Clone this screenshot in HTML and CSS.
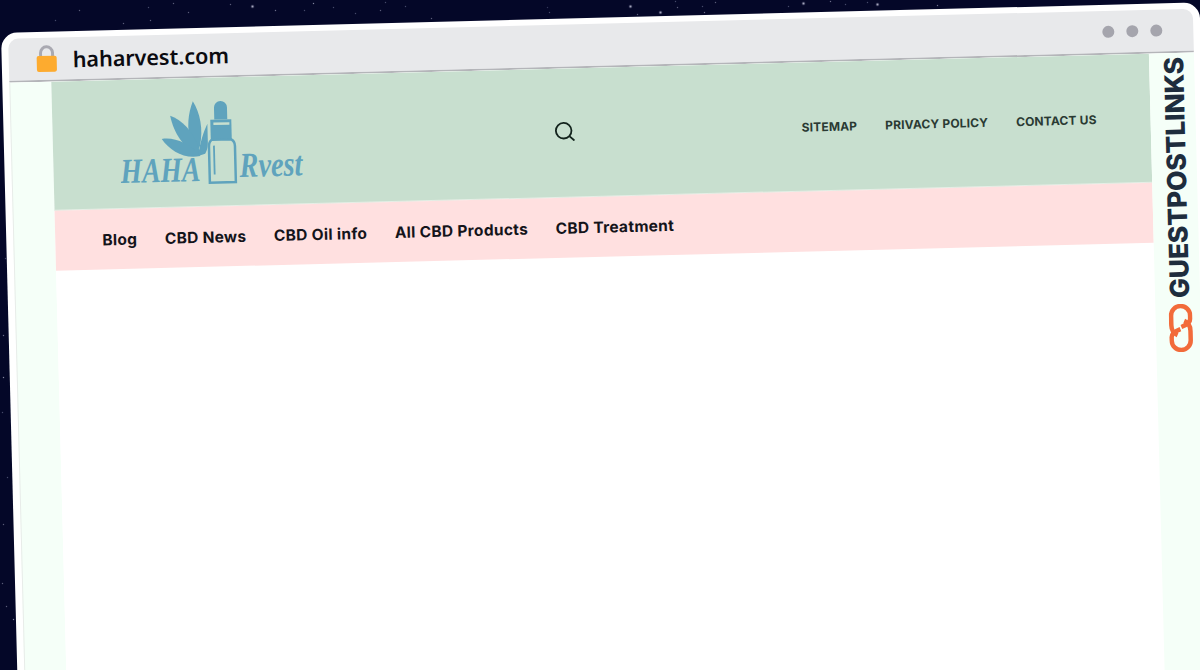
FILE: index.html
```html
<!DOCTYPE html>
<html>
<head>
  <meta charset="UTF-8">
  <title>haharvest.com</title>
  <link rel="stylesheet" href="styles.css">
</head>
<body>
  <div class="stage">
    <div class="stars"></div>
    <div class="window">
      <div class="chrome">
        <svg class="lock" width="22" height="28" viewBox="0 0 22 28">
          <path d="M5 13V8a6 6 0 0 1 12 0v5" fill="none" stroke="#a9a9b1" stroke-width="3"/>
          <rect x="1" y="11" width="20" height="16" rx="2" fill="#fdab2f"/>
        </svg>
        <span class="domain">haharvest.com</span>
        <div class="dots">
          <span class="dot"></span>
          <span class="dot"></span>
          <span class="dot"></span>
        </div>
      </div>
      <div class="frame">
        <div class="side side-left"></div>
        <div class="page">
          <header class="site-header">
            <svg class="logo" width="214" height="100" viewBox="0 -7 214 100">
              <g fill="#5fa3bd">
                <path d="M74 2C81 14 84 30 80 47C78 53 73 52 71 44C67 28 69 14 74 2Z"/>
                <path d="M51 16C62 20 74 32 79 50L80 57C64 50 54 33 51 16Z"/>
                <path d="M42 39C54 37 70 44 80 57C64 60 50 51 42 39Z"/>
                <path d="M88 25C84 33 80 44 78 57L85 55C88 50 88 46 88 42Z"/>
                <path d="M95 21V9a6.500 6.500 0 0 1 13 0V21Z"/>
                <path d="M91 21H112V41H91Z"/>
              </g>
              <rect x="94" y="24" width="16" height="2.500" fill="#c8dfcf"/>
              <path d="M92 41H111Q115 43 115 48V84H89V48Q89 43 92 41Z" fill="#c8dfcf" stroke="#5fa3bd" stroke-width="2.500"/>
              <path d="M94 47V76" stroke="#5fa3bd" stroke-width="1.800"/>
              <text class="logo-text" x="0" y="82" textLength="80" lengthAdjust="spacingAndGlyphs">HAHA</text>
              <text class="logo-text" x="119" y="79" textLength="63" lengthAdjust="spacingAndGlyphs">Rvest</text>
            </svg>
            <svg class="search" width="22" height="22" viewBox="0 0 22 22" fill="none" stroke="#13231d" stroke-width="1.800">
              <circle cx="10" cy="10" r="7.800"/>
              <path d="M15.800 15.800L20 19.500" stroke-linecap="round"/>
            </svg>
            <nav class="top-links">
              <a>SITEMAP</a>
              <a>PRIVACY POLICY</a>
              <a>CONTACT US</a>
            </nav>
          </header>
          <nav class="main-nav">
            <a>Blog</a>
            <a>CBD News</a>
            <a>CBD Oil info</a>
            <a>All CBD Products</a>
            <a>CBD Treatment</a>
          </nav>
        </div>
        <div class="side side-right">
          <div class="brand">
            <span class="brand-name">GUESTPOSTLINKS</span>
            <svg class="brand-icon" width="24" height="48" viewBox="0 0 24 48" fill="none" stroke="#f26b3a" stroke-width="4.500">
              <path d="M8.500 31C4 29 2.500 26 2.500 21V11.500a9.500 9.500 0 0 1 19 0V15C21.500 19 18 21 12.500 23"/>
              <path d="M15.500 17C20 19 21.500 22 21.500 27V36.500a9.500 9.500 0 0 1-19 0V33C2.500 29 6 27 11.500 25"/>
            </svg>
          </div>
        </div>
      </div>
    </div>
  </div>
</body>
</html>
```

FILE: styles.css
```css
body {
  margin: 0;
  font-family: "Inter", "Liberation Sans", sans-serif;
}

.stage {
  position: relative;
  width: 1200px;
  height: 670px;
  overflow: hidden;
  background: #040728;
}

/* starfield, one dot per shadow */
.stars {
  position: absolute;
  left: 0;
  top: 0;
  width: 1px;
  height: 1px;
  box-shadow:
    79px 10px 1px #8a8ca8, 55px 20px 1px #6b6e90, 123px 23px 1px #8a8ca8,
    150px 20px 1px #8a8ca8, 148px 7px 1px #6b6e90, 173px 3px 1px #8a8ca8,
    188px 12px 1px #8a8ca8, 230px 4px 1px #8a8ca8, 252px 6px 1px 0.500px #c9cbe0,
    275px 10px 1px #a5a7c0, 304px 10px 1px #6b6e90, 313px 3px 1px #c9cbe0,
    333px 7px 1px #6b6e90, 355px 13px 1px #6b6e90, 380px 10px 1px #8a8ca8,
    385px 2px 1px #6b6e90, 405px 6px 1px #6b6e90, 431px 18px 1px #8a8ca8,
    547px 7px 1px #4d5075, 549px 12px 1px #6b6e90, 630px 6px 1px 0.500px #c9cbe0,
    660px 12px 1px 0.500px #c9cbe0, 637px 14px 1px #8a8ca8, 677px 7px 1px #8a8ca8,
    675px 1px 1px #6b6e90, 702px 6px 1px #6b6e90, 704px 12px 1px #a5a7c0,
    715px 2px 1px #8a8ca8, 803px 3px 1px 0.500px #c9cbe0, 830px 1px 1px #a5a7c0,
    788px 6px 1px #6b6e90, 845px 4px 1px #6b6e90, 877px 4px 1px 0.500px #c9cbe0,
    867px 2px 1px #6b6e90, 937px 5px 1px #a5a7c0, 5px 258px 1px #6b6e90,
    3px 335px 1px #a5a7c0, 3px 377px 1px #c9cbe0, 2px 412px 1px #6b6e90,
    7px 477px 1px #6b6e90, 3px 524px 1px #8a8ca8, 2px 583px 1px #8a8ca8,
    6px 606px 1px #8a8ca8, 13px 619px 1px #c9cbe0;
}

/* tilted browser window */
.window {
  position: absolute;
  left: 1px;
  top: 33px;
  width: 1199px;
  height: 680px;
  box-sizing: border-box;
  padding: 6px 7px 0;
  background: #fff;
  border-radius: 16px 16px 0 0;
  transform: rotate(-1.46deg);
  transform-origin: 0 0;
}

.chrome {
  display: flex;
  align-items: center;
  height: 42px;
  padding: 0 31px 0 27px;
  background: #e8e9eb;
  border-radius: 10px 10px 0 0;
  border-bottom: 2px solid #b4b5b9;
}

.lock {
  margin-right: 15px;
}

.domain {
  font-family: "Noto Sans", sans-serif;
  font-size: 21.500px;
  font-weight: 600;
  color: #0b0b10;
}

.dots {
  display: flex;
  gap: 12px;
  margin-left: auto;
}

.dot {
  width: 12px;
  height: 12px;
  border-radius: 50%;
  background: #a5a5ad;
}

.frame {
  display: flex;
  height: 630px;
}

.side {
  background: #f5fff8;
}

.side-left {
  flex: 0 0 41px;
  border-left: 1px solid #e8ece9;
}

.side-right {
  flex: 1;
}

.page {
  flex: 0 0 1098px;
  background: #fff;
}

.site-header {
  display: flex;
  align-items: center;
  height: 128px;
  padding: 0 54px 0 67px;
  background: #c8dfcf;
  border-bottom: 1px solid #e6eee6;
}

.search {
  margin: 0 0 3px 220px;
}

.top-links {
  display: flex;
  gap: 28px;
  margin-left: auto;
  font-size: 12px;
  font-weight: 700;
  letter-spacing: 0.15px;
  color: #2a3a33;
}

.logo-text {
  font-family: "Liberation Serif", serif;
  font-style: italic;
  font-weight: 700;
  font-size: 35px;
  fill: #5fa3bd;
}

.main-nav {
  display: flex;
  align-items: center;
  gap: 27.500px;
  height: 60px;
  padding-left: 47px;
  background: #ffe0e0;
  font-size: 15.500px;
  font-weight: 700;
  letter-spacing: 0.3px;
  color: #14141a;
}

.brand {
  display: flex;
  flex-direction: column;
  align-items: center;
  gap: 6px;
  padding: 4px 0 0 3px;
}

.brand-name {
  writing-mode: vertical-rl;
  transform: rotate(180deg);
  font-size: 26.500px;
  font-weight: 800;
  letter-spacing: -0.2px;
  color: #1e2d3d;
}

.brand-icon {
  margin-left: 2px;
}
```
